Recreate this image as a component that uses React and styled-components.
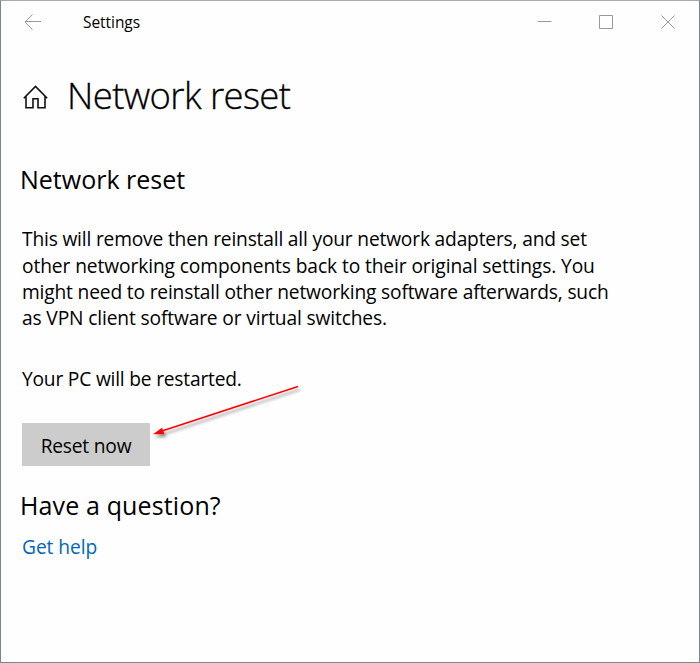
import React from 'react'
import styled, { createGlobalStyle } from 'styled-components'

const GlobalStyle = createGlobalStyle`
    * {
        box-sizing: border-box;
    }

    body {
        margin: 0;
        font-family: "Segoe UI", "Open Sans", "Noto Sans", sans-serif;
        color: #000;
    }
`

const Window = styled.div`
    width: 700px;
    height: 663px;
    background: #fefefe;
    border: 1px solid #71899b;
    border-top-color: #a9a9a9;
    overflow: hidden;
`

const TitleBar = styled.header`
    height: 41px;
    display: flex;
    align-items: center;
    padding: 0 24.5px 0 23px;
`

const BarTitle = styled.span`
    flex: 1;
    margin-left: 42px;
    font-size: 15.5px;
    line-height: 22px;
    letter-spacing: ${props => props.$spacing}px;
`

const WindowControls = styled.div`
    display: flex;
    gap: 47.5px;
`

const Icon = styled.svg`
    display: block;
    flex: none;
    fill: none;
    stroke: ${props => props.$color || '#999'};
    stroke-width: ${props => props.$stroke || 1};
`

const HomeIcon = styled(Icon)`
    margin-top: 3px;
`

const Content = styled.main`
    padding: 28px 21px 0;
`

const PageHeader = styled.div`
    height: 50px;
    display: flex;
    align-items: center;
    gap: 19px;
    padding-left: 1px;
`

const PageTitle = styled.h1`
    margin: 0;
    font-size: 36.5px;
    line-height: 50px;
    font-weight: 300;
    -webkit-text-stroke: 0.3px #000;
    white-space: nowrap;
    letter-spacing: ${props => props.$spacing}px;
`

const SectionTitle = styled.h2`
    margin: ${props => props.$top}px 0 0 -2px;
    font-size: 25px;
    line-height: 36px;
    font-weight: 400;
    letter-spacing: ${props => props.$spacing}px;
`

const Description = styled.p`
    margin: ${props => props.$top}px 0 0;
    font-size: 19.2px;
    line-height: 26.25px;
`

const Line = styled.span`
    display: block;
    white-space: nowrap;
    letter-spacing: ${props => props.$spacing}px;
`

const ActionRow = styled.div`
    position: relative;
    margin-top: 31px;
`

const ResetButton = styled.button`
    display: block;
    width: 128px;
    height: 43px;
    padding: 2px 0 0;
    border: 0;
    background: #ccc;
    color: #000;
    font: inherit;
    font-size: 19.2px;
    line-height: 26px;
    letter-spacing: ${props => props.$spacing}px;
`

const Arrow = styled.svg`
    position: absolute;
    left: 128px;
    top: -43px;
    overflow: visible;
    filter: drop-shadow(2px 3px 1.5px rgba(0, 0, 0, 0.4));
`

const HelpLink = styled.a`
    display: block;
    width: max-content;
    margin-top: 11px;
    font-size: 19.2px;
    line-height: 26px;
    color: #0067b8;
    text-decoration: none;
    letter-spacing: ${props => props.$spacing}px;
`

const descriptionLines = [
    { text: 'This will remove then reinstall all your network adapters, and set', spacing: -0.18 },
    { text: 'other networking components back to their original settings. You', spacing: -0.1 },
    { text: 'might need to reinstall other networking software afterwards, such', spacing: -0.17 },
    { text: 'as VPN client software or virtual switches.', spacing: -0.14 },
]

class App extends React.Component {

    render() {
        return (
            <Window>
                <GlobalStyle />
                <TitleBar>
                    <Icon width="17" height="16" viewBox="0 0 17 16">
                        <path d="M8.5 .5L1 8L8.5 15.5M1 7.5H17" />
                    </Icon>
                    <BarTitle $spacing={-0.05}>Settings</BarTitle>
                    <WindowControls>
                        <Icon width="14" height="14" viewBox="0 0 14 14">
                            <path d="M0 6.5H13.5" />
                        </Icon>
                        <Icon width="14" height="14" viewBox="0 0 14 14">
                            <path d="M.5 .5H13.5V13.5H.5Z" />
                        </Icon>
                        <Icon width="14" height="14" viewBox="0 0 14 14">
                            <path d="M.5 .5L13.5 13.5M13.5 .5L.5 13.5" />
                        </Icon>
                    </WindowControls>
                </TitleBar>
                <Content>
                    <PageHeader>
                        <HomeIcon width="25" height="24" viewBox="0 0 25 24" $color="#111" $stroke={1.6}>
                            <path d="M.8 13.2L12.5 1.5L24.2 13.2M3 11V22.7H10V13.7H15V22.7H22V11" />
                        </HomeIcon>
                        <PageTitle $spacing={-0.6}>Network reset</PageTitle>
                    </PageHeader>
                    <SectionTitle $top={41} $spacing={0}>Network reset</SectionTitle>
                    <Description $top={29.3}>
                        {descriptionLines.map(line => (
                            <Line key={line.text} $spacing={line.spacing}>{line.text}</Line>
                        ))}
                    </Description>
                    <Description $top={34.7}>
                        <Line $spacing={-0.2}>Your PC will be restarted.</Line>
                    </Description>
                    <ActionRow>
                        <ResetButton $spacing={-0.2}>Reset now</ResetButton>
                        <Arrow width="150" height="60" viewBox="0 0 150 60">
                            <path d="M148 6.5L12 51" stroke="#f00" strokeWidth="1.6" fill="none" />
                            <path d="M3 54.3L12 47.8L14.5 54.3Z" fill="#f00" />
                        </Arrow>
                    </ActionRow>
                    <SectionTitle $top={21} $spacing={0.13}>Have a question?</SectionTitle>
                    <HelpLink $spacing={-0.05}>Get help</HelpLink>
                </Content>
            </Window>
        )
    }
}

export default App
